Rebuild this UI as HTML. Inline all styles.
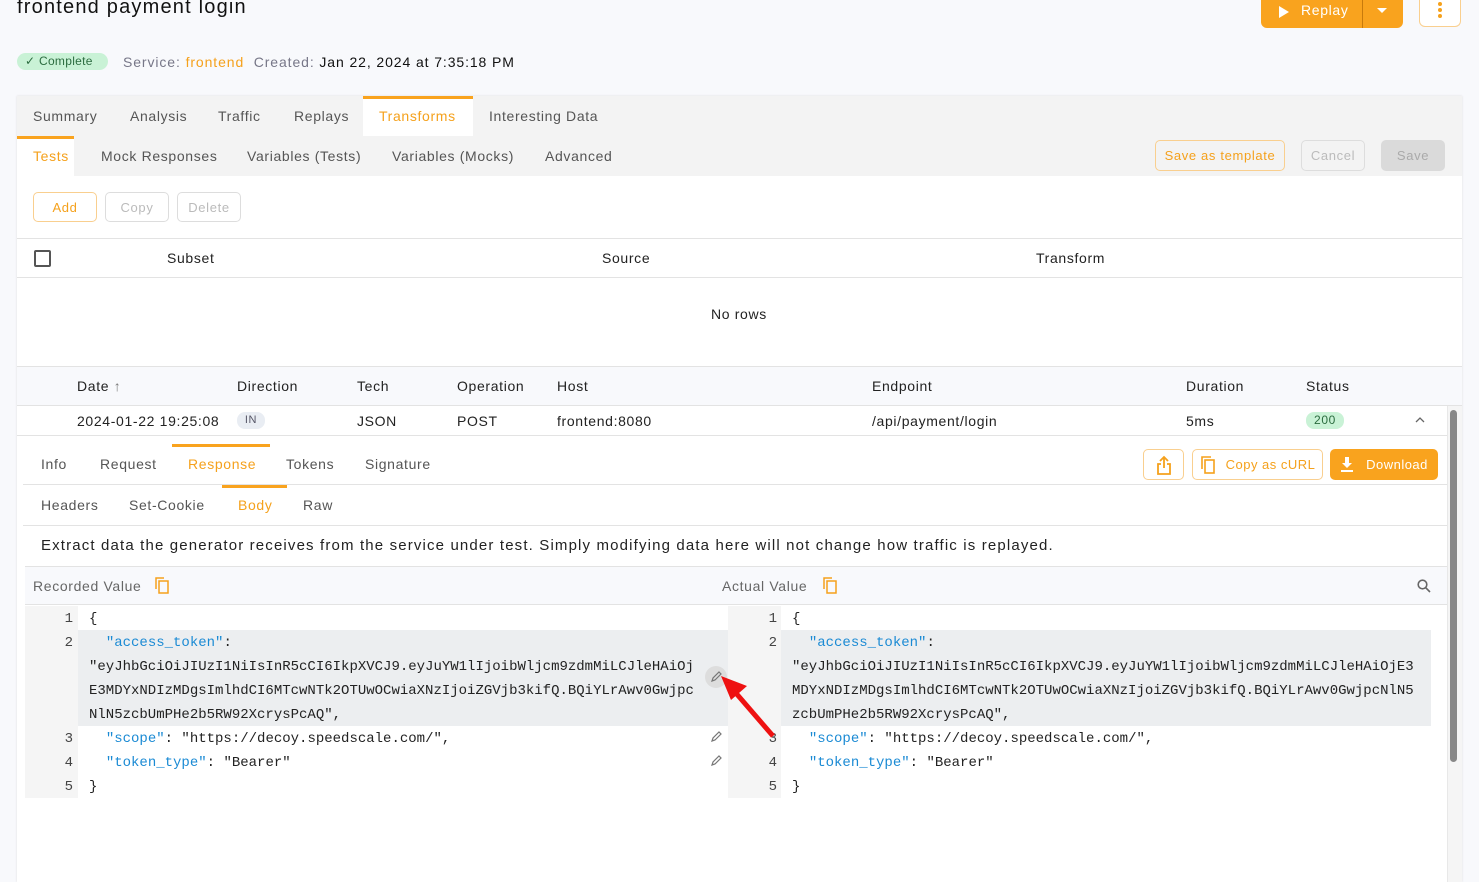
<!DOCTYPE html>
<html><head><meta charset="utf-8"><style>
*{box-sizing:border-box;margin:0;padding:0}
body{width:1479px;height:882px;overflow:hidden;background:#f8f9fc;font-family:"Liberation Sans",sans-serif;color:#222;position:relative;font-size:14px;letter-spacing:0.65px}
.a{position:absolute;white-space:nowrap}
.g{color:#555}
.o{color:#f5a11c}
.btn{position:absolute;border:1px solid #f9cf8f;border-radius:5px;color:#f5a11c;font-size:13px;display:flex;align-items:center;justify-content:center;background:#fff}
.dis{border-color:#ddd;color:#bbb}
.mono{font-family:"Liberation Mono",monospace;font-size:14px;letter-spacing:0}
.mono .a{white-space:pre}
.k{color:#1a8ad4}
.ln{position:absolute;width:50px;text-align:right;color:#444}
</style></head><body>
<div class="a" style="left:17px;top:-4px;font-size:20px;color:#111;letter-spacing:1.2px">frontend payment login</div>
<div class="a" style="left:1261px;top:0;width:142px;height:28px;background:#f9a31e;border-radius:0 0 6px 6px;color:#fff;font-size:14px">
 <span class="a" style="left:18px;top:6px;width:0;height:0;border-left:10px solid #fff;border-top:6px solid transparent;border-bottom:6px solid transparent"></span>
 <span class="a" style="left:40px;top:2px">Replay</span>
 <span class="a" style="left:101px;top:0;width:1px;height:28px;background:#c77a0c"></span>
 <span class="a" style="left:116px;top:8px;border-top:5px solid #fff;border-left:5px solid transparent;border-right:5px solid transparent"></span>
</div>
<div class="a" style="left:1419px;top:0;width:42px;height:27px;border:1px solid #f9cf8f;border-top:none;border-radius:0 0 6px 6px;background:#fff">
 <span class="a" style="left:18px;top:2px;width:4px;height:4px;border-radius:2px;background:#f5a11c;box-shadow:0 6px 0 #f5a11c,0 12px 0 #f5a11c"></span>
</div>
<div class="a" style="left:17px;top:53px;width:91px;height:17px;background:#c9f2d6;border-radius:9px;color:#2b6c3f;font-size:12px;padding-left:8px;line-height:17px;letter-spacing:0.3px">✓ Complete</div>
<div class="a" style="left:123px;top:54px;color:#778;font-size:14px;letter-spacing:0.9px">Service: <span class="o">frontend</span> &nbsp;Created: <span style="color:#111">Jan 22, 2024 at 7:35:18 PM</span></div>

<div class="a" style="left:17px;top:96px;width:1445px;height:786px;background:#fff;box-shadow:0 0 2px #ddd">
 <div class="a" style="left:0;top:0;width:1445px;height:80px;background:#f3f3f3"></div>
 <div class="a" style="left:346px;top:0;width:110px;height:40px;background:#fff;border-top:3px solid #f9a31e"></div>
 <div class="a g" style="left:16px;top:12px">Summary</div>
 <div class="a g" style="left:113px;top:12px">Analysis</div>
 <div class="a g" style="left:201px;top:12px">Traffic</div>
 <div class="a g" style="left:277px;top:12px">Replays</div>
 <div class="a o" style="left:362px;top:12px">Transforms</div>
 <div class="a g" style="left:472px;top:12px">Interesting Data</div>
 <div class="a" style="left:0;top:40px;width:57px;height:40px;background:#fff;border-top:3px solid #f9a31e"></div>
 <div class="a o" style="left:16px;top:52px">Tests</div>
 <div class="a g" style="left:84px;top:52px">Mock Responses</div>
 <div class="a g" style="left:230px;top:52px">Variables (Tests)</div>
 <div class="a g" style="left:375px;top:52px">Variables (Mocks)</div>
 <div class="a g" style="left:528px;top:52px">Advanced</div>
 <div class="btn" style="left:1138px;top:44px;width:130px;height:31px;background:#f3f3f3">Save as template</div>
 <div class="btn dis" style="left:1284px;top:44px;width:64px;height:31px;background:#f3f3f3">Cancel</div>
 <div class="btn" style="left:1364px;top:44px;width:64px;height:31px;background:#dadada;border-color:#dadada;color:#aaa">Save</div>
 <div class="btn" style="left:16px;top:96px;width:64px;height:30px">Add</div>
 <div class="btn dis" style="left:88px;top:96px;width:64px;height:30px">Copy</div>
 <div class="btn dis" style="left:160px;top:96px;width:64px;height:30px">Delete</div>
 <div class="a" style="left:0;top:142px;width:1445px;border-top:1px solid #e3e3e3;height:40px;border-bottom:1px solid #e3e3e3"></div>
 <div class="a" style="left:17px;top:154px;width:17px;height:17px;border:2px solid #555;border-radius:2px"></div>
 <div class="a" style="left:150px;top:154px">Subset</div>
 <div class="a" style="left:585px;top:154px">Source</div>
 <div class="a" style="left:1019px;top:154px">Transform</div>
 <div class="a" style="left:694px;top:210px">No rows</div>
 <div class="a" style="left:0;top:270px;width:1445px;height:40px;background:#f8f9fc;border-top:1px solid #e3e3e3;border-bottom:1px solid #e3e3e3"></div>
 <div class="a" style="left:60px;top:282px">Date <span style="color:#777">↑</span></div>
 <div class="a" style="left:220px;top:282px">Direction</div>
 <div class="a" style="left:340px;top:282px">Tech</div>
 <div class="a" style="left:440px;top:282px">Operation</div>
 <div class="a" style="left:540px;top:282px">Host</div>
 <div class="a" style="left:855px;top:282px">Endpoint</div>
 <div class="a" style="left:1169px;top:282px">Duration</div>
 <div class="a" style="left:1289px;top:282px">Status</div>
 <div class="a" style="left:60px;top:317px">2024-01-22 19:25:08</div>
 <div class="a" style="left:220px;top:316px;width:28px;height:17px;background:#e9edf3;border-radius:8px;font-size:11px;color:#556;text-align:center;line-height:17px">IN</div>
 <div class="a" style="left:340px;top:317px">JSON</div>
 <div class="a" style="left:440px;top:317px">POST</div>
 <div class="a" style="left:540px;top:317px">frontend:8080</div>
 <div class="a" style="left:855px;top:317px">/api/payment/login</div>
 <div class="a" style="left:1169px;top:317px">5ms</div>
 <div class="a" style="left:1289px;top:316px;width:38px;height:17px;background:#c9f2d6;border-radius:8px;font-size:12px;color:#2b6c3f;text-align:center;line-height:17px">200</div>
 <svg class="a" style="left:1398px;top:321px" width="10" height="6" viewBox="0 0 10 6" fill="none" stroke="#666" stroke-width="1.3"><path d="M1 5l4-4 4 4"/></svg>
 <div class="a" style="left:0;top:339px;width:1430px;border-top:1px solid #e3e3e3"></div>
 <div class="a" style="left:1430px;top:310px;width:15px;height:476px;background:#f5f5f5;border-left:1px solid #e8e8e8"></div>
 <div class="a" style="left:1433px;top:314px;width:7px;height:352px;background:#888;border-radius:4px"></div>
 <div class="a" style="left:155px;top:348px;width:98px;height:3px;background:#f9a31e"></div>
 <div class="a g" style="left:24px;top:360px">Info</div>
 <div class="a g" style="left:83px;top:360px">Request</div>
 <div class="a o" style="left:171px;top:360px">Response</div>
 <div class="a g" style="left:269px;top:360px">Tokens</div>
 <div class="a g" style="left:348px;top:360px">Signature</div>
 <div class="btn" style="left:1126px;top:353px;width:41px;height:31px"><svg width="16" height="20" viewBox="0 0 16 20" fill="none" stroke="#f5a11c" stroke-width="1.8"><path d="M8 13V2M4 6l4-4 4 4M5 9H2v10h12V9h-3"/></svg></div>
 <div class="btn" style="left:1175px;top:353px;width:131px;height:31px;letter-spacing:0.5px"><svg width="16" height="18" viewBox="0 0 16 18" fill="none" stroke="#f5a11c" stroke-width="1.6" style="margin-right:10px"><path d="M2 13V1h9"/><rect x="5" y="4" width="9" height="13"/></svg>Copy as cURL</div>
 <div class="btn" style="left:1313px;top:353px;width:108px;height:31px;background:#f9a31e;border-color:#f9a31e;color:#fff;letter-spacing:0.5px"><svg width="14" height="16" viewBox="0 0 14 16" fill="#fff" style="margin-right:12px"><path d="M5 0h4v6h3l-5 5-5-5h3z"/><rect x="1" y="13" width="12" height="2"/></svg>Download</div>
 <div class="a" style="left:6px;top:388px;width:1424px;border-top:1px solid #e3e3e3"></div>
 <div class="a" style="left:205px;top:389px;width:65px;height:3px;background:#f9a31e"></div>
 <div class="a g" style="left:24px;top:401px">Headers</div>
 <div class="a g" style="left:112px;top:401px">Set-Cookie</div>
 <div class="a o" style="left:221px;top:401px">Body</div>
 <div class="a g" style="left:286px;top:401px">Raw</div>
 <div class="a" style="left:6px;top:429px;width:1424px;border-top:1px solid #e3e3e3"></div>
 <div class="a" style="left:24px;top:441px;font-size:15px;color:#222;letter-spacing:1.15px">Extract data the generator receives from the service under test. Simply modifying data here will not change how traffic is replayed.</div>
 <div class="a" style="left:8px;top:470px;width:1422px;height:39px;background:#f8f9fc;border-top:1px solid #e3e3e3;border-bottom:1px solid #e3e3e3"></div>
 <div class="a" style="left:16px;top:482px;color:#666">Recorded Value</div>
 <svg class="a" style="left:138px;top:481px" width="14" height="17" viewBox="0 0 14 17" fill="none" stroke="#f5a11c" stroke-width="1.5"><path d="M1 12V1h8"/><rect x="4" y="4" width="9" height="12"/></svg>
 <div class="a" style="left:705px;top:482px;color:#666">Actual Value</div>
 <svg class="a" style="left:806px;top:481px" width="14" height="17" viewBox="0 0 14 17" fill="none" stroke="#f5a11c" stroke-width="1.5"><path d="M1 12V1h8"/><rect x="4" y="4" width="9" height="12"/></svg>
 <svg class="a" style="left:1400px;top:483px" width="14" height="14" viewBox="0 0 14 14" fill="none" stroke="#666" stroke-width="1.6"><circle cx="5.5" cy="5.5" r="4.3"/><path d="M8.7 8.7L13 13"/></svg>
 <div class="a" style="left:8px;top:510px;width:1406px;height:192px;background:#f5f5f5"></div>
 <div class="a" style="left:61px;top:510px;width:650px;height:24px;background:#fff"></div>
 <div class="a" style="left:61px;top:534px;width:650px;height:96px;background:#eceef0"></div>
 <div class="a" style="left:61px;top:630px;width:650px;height:72px;background:#fff"></div>
 <div class="a" style="left:764px;top:510px;width:650px;height:24px;background:#fff"></div>
 <div class="a" style="left:764px;top:534px;width:650px;height:96px;background:#eceef0"></div>
 <div class="a" style="left:764px;top:630px;width:650px;height:72px;background:#fff"></div>
 <div class="mono" style="position:absolute;left:0;top:511px;line-height:24px">
  <div class="ln" style="left:6px;top:0">1</div><div class="ln" style="left:6px;top:24px">2</div><div class="ln" style="left:6px;top:120px">3</div><div class="ln" style="left:6px;top:144px">4</div><div class="ln" style="left:6px;top:168px">5</div>
  <div class="a" style="left:72px;top:0">{</div>
  <div class="a" style="left:72px;top:24px">  <span class="k">"access_token"</span>:</div>
  <div class="a" style="left:72px;top:48px">"eyJhbGciOiJIUzI1NiIsInR5cCI6IkpXVCJ9.eyJuYW1lIjoibWljcm9zdmMiLCJleHAiOj</div>
  <div class="a" style="left:72px;top:72px">E3MDYxNDIzMDgsImlhdCI6MTcwNTk2OTUwOCwiaXNzIjoiZGVjb3kifQ.BQiYLrAwv0Gwjpc</div>
  <div class="a" style="left:72px;top:96px">NlN5zcbUmPHe2b5RW92XcrysPcAQ",</div>
  <div class="a" style="left:72px;top:120px">  <span class="k">"scope"</span>: "https://decoy.speedscale.com/",</div>
  <div class="a" style="left:72px;top:144px">  <span class="k">"token_type"</span>: "Bearer"</div>
  <div class="a" style="left:72px;top:168px">}</div>
  <div class="ln" style="left:710px;top:0">1</div><div class="ln" style="left:710px;top:24px">2</div><div class="ln" style="left:710px;top:120px">3</div><div class="ln" style="left:710px;top:144px">4</div><div class="ln" style="left:710px;top:168px">5</div>
  <div class="a" style="left:775px;top:0">{</div>
  <div class="a" style="left:775px;top:24px">  <span class="k">"access_token"</span>:</div>
  <div class="a" style="left:775px;top:48px">"eyJhbGciOiJIUzI1NiIsInR5cCI6IkpXVCJ9.eyJuYW1lIjoibWljcm9zdmMiLCJleHAiOjE3</div>
  <div class="a" style="left:775px;top:72px">MDYxNDIzMDgsImlhdCI6MTcwNTk2OTUwOCwiaXNzIjoiZGVjb3kifQ.BQiYLrAwv0GwjpcNlN5</div>
  <div class="a" style="left:775px;top:96px">zcbUmPHe2b5RW92XcrysPcAQ",</div>
  <div class="a" style="left:775px;top:120px">  <span class="k">"scope"</span>: "https://decoy.speedscale.com/",</div>
  <div class="a" style="left:775px;top:144px">  <span class="k">"token_type"</span>: "Bearer"</div>
  <div class="a" style="left:775px;top:168px">}</div>
 </div>
 <div class="a" style="left:688px;top:570px;width:22px;height:22px;border-radius:11px;background:#ddd"></div>
 <svg class="a" style="left:693px;top:575px" width="12" height="12" viewBox="0 0 12 12" fill="none" stroke="#777" stroke-width="1.2"><path d="M2 10l1-3 6-6 2 2-6 6z"/></svg>
 <svg class="a" style="left:693px;top:635px" width="12" height="12" viewBox="0 0 12 12" fill="none" stroke="#777" stroke-width="1.2"><path d="M2 10l1-3 6-6 2 2-6 6z"/></svg>
 <svg class="a" style="left:693px;top:659px" width="12" height="12" viewBox="0 0 12 12" fill="none" stroke="#777" stroke-width="1.2"><path d="M2 10l1-3 6-6 2 2-6 6z"/></svg>
 <svg class="a" style="left:700px;top:578px" width="62" height="66" viewBox="0 0 62 66"><path d="M56 62L18 18" stroke="#ee1111" stroke-width="5"/><path d="M4 2l26 10-16 14z" fill="#ee1111"/></svg>
</div>
</body></html>
